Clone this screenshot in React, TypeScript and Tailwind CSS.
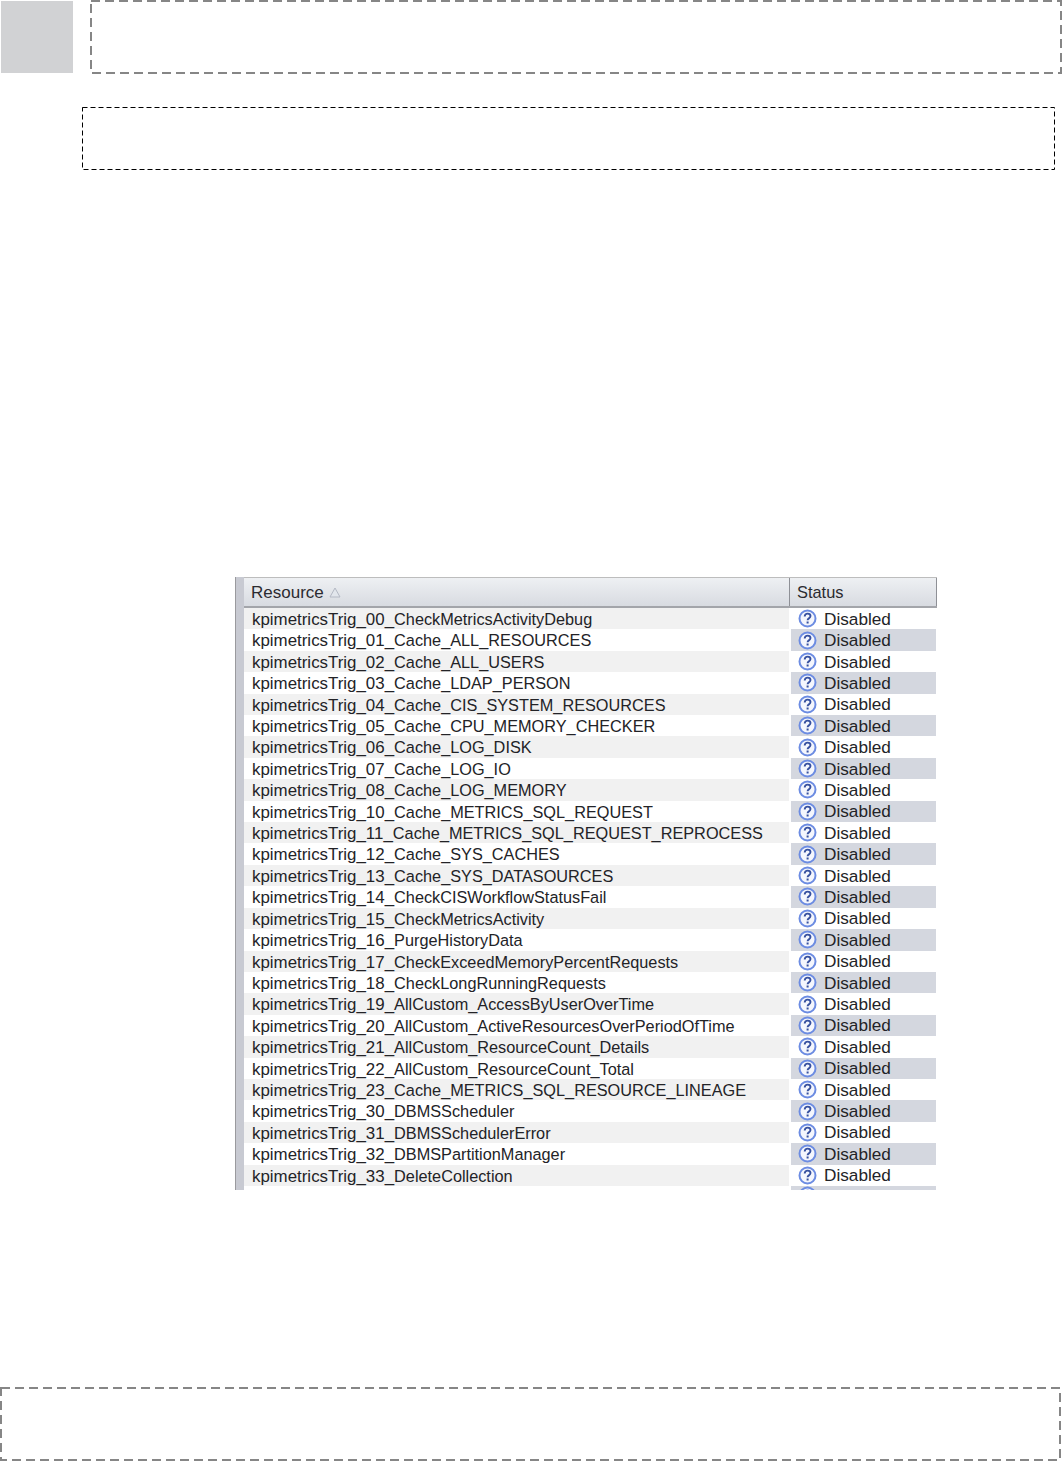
const rows = [
  'kpimetricsTrig_00_CheckMetricsActivityDebug',
  'kpimetricsTrig_01_Cache_ALL_RESOURCES',
  'kpimetricsTrig_02_Cache_ALL_USERS',
  'kpimetricsTrig_03_Cache_LDAP_PERSON',
  'kpimetricsTrig_04_Cache_CIS_SYSTEM_RESOURCES',
  'kpimetricsTrig_05_Cache_CPU_MEMORY_CHECKER',
  'kpimetricsTrig_06_Cache_LOG_DISK',
  'kpimetricsTrig_07_Cache_LOG_IO',
  'kpimetricsTrig_08_Cache_LOG_MEMORY',
  'kpimetricsTrig_10_Cache_METRICS_SQL_REQUEST',
  'kpimetricsTrig_11_Cache_METRICS_SQL_REQUEST_REPROCESS',
  'kpimetricsTrig_12_Cache_SYS_CACHES',
  'kpimetricsTrig_13_Cache_SYS_DATASOURCES',
  'kpimetricsTrig_14_CheckCISWorkflowStatusFail',
  'kpimetricsTrig_15_CheckMetricsActivity',
  'kpimetricsTrig_16_PurgeHistoryData',
  'kpimetricsTrig_17_CheckExceedMemoryPercentRequests',
  'kpimetricsTrig_18_CheckLongRunningRequests',
  'kpimetricsTrig_19_AllCustom_AccessByUserOverTime',
  'kpimetricsTrig_20_AllCustom_ActiveResourcesOverPeriodOfTime',
  'kpimetricsTrig_21_AllCustom_ResourceCount_Details',
  'kpimetricsTrig_22_AllCustom_ResourceCount_Total',
  'kpimetricsTrig_23_Cache_METRICS_SQL_RESOURCE_LINEAGE',
  'kpimetricsTrig_30_DBMSScheduler',
  'kpimetricsTrig_31_DBMSSchedulerError',
  'kpimetricsTrig_32_DBMSPartitionManager',
  'kpimetricsTrig_33_DeleteCollection',
]

function DashedBox({ className, w, h, thin }: { className: string; w: number; h: number; thin?: boolean }) {
  const inset = thin ? 0.5 : 1
  return (
    <div className={`relative ${className}`}>
      <svg className="absolute inset-0 w-full h-full" fill="none">
        <rect
          x={inset}
          y={inset}
          width={w - inset * 2}
          height={h - inset * 2}
          stroke={thin ? '#000' : '#868686'}
          strokeWidth={thin ? 1 : 2}
          strokeDasharray={thin ? '5 3' : '9 5'}
        />
      </svg>
    </div>
  )
}

function HelpIcon() {
  return (
    <svg width="19" height="19" viewBox="0 0 19 19" className="shrink-0">
      <circle cx="9.5" cy="9.5" r="8" fill="#f4f6fd" stroke="#6c8ce2" strokeWidth="2" />
      <path d="M6.7 7.4c0-1.7 1.2-2.8 2.9-2.8s2.9 1 2.9 2.5c0 2.3-2.9 2.2-2.9 4.1" fill="none" stroke="#36509f" strokeWidth="1.9" />
      <rect x="8.6" y="12.5" width="2" height="2" fill="#36509f" />
    </svg>
  )
}

function Row({ name, i }: { name: string; i: number }) {
  const odd = i % 2 === 1
  return (
    <div className="flex h-[21.42px] shrink-0 leading-[23px] text-[#232327]">
      <div className={`w-[545px] pl-[8px] text-[16.3px] whitespace-nowrap ${odd ? 'bg-white' : 'bg-[#f1f1f1]'}`}>
        <span className="text-[16.9px]">{name.slice(0, 18)}</span>
        {name.slice(18)}
      </div>
      <div className="w-[2px] bg-white" />
      <div className={`w-[145px] flex items-center gap-[7px] pl-[7px] text-[17.2px] ${odd ? 'bg-[#d4d7df]' : 'bg-white'}`}>
        <HelpIcon />
        <span className="pt-[1px]">Disabled</span>
      </div>
    </div>
  )
}

export default function App() {
  return (
    <div className="w-[1063px] h-[1461px] bg-white overflow-hidden font-['Liberation_Sans',sans-serif]">
      <div className="flex h-[73px]">
        <div className="w-[72px] h-[72px] mt-[1px] ml-[1px] bg-[#d1d2d4]" />
        <DashedBox w={972} h={74} className="ml-[17px] w-[972px] h-[74px]" />
      </div>
      <DashedBox thin w={973} h={63} className="mt-[34px] ml-[82px] w-[973px] h-[63px]" />

      <div className="mt-[407px] ml-[235px] w-[702px] h-[613px] flex overflow-hidden">
        <div className="w-[9px] bg-[#c8cad2] border-l border-[#9a9a9e]" />
        <div className="flex-1 flex flex-col overflow-hidden">
          <div className="flex h-[31px] shrink-0 text-[#2b2b30] bg-gradient-to-b from-[#eef0f3] to-[#d8dbe1] border-t border-[#bdbdbd] border-b-2 border-b-[#a3a5aa]">
            <div className="w-[546px] pl-[7px] pt-[1px] flex items-center gap-[5px] text-[17px] border-r border-[#8e9096]">
              Resource
              <svg width="12" height="11" viewBox="0 0 12 11">
                <path d="M6 1 L11 10 H1 Z" fill="#e2e6ec" stroke="#b4b9c4" />
              </svg>
            </div>
            <div className="flex-1 pl-[7px] flex items-center text-[16.4px] border-r border-[#8e9096]">Status</div>
          </div>
          {rows.map((name, i) => (
            <Row key={name} name={name} i={i} />
          ))}
          <div className="flex h-[21px] shrink-0">
            <div className="w-[547px]" />
            <div className="w-[145px] pl-[7px] bg-[#d4d7df]">
              <HelpIcon />
            </div>
          </div>
        </div>
      </div>

      <DashedBox w={1061} h={74} className="mt-[197px] w-[1061px] h-[74px]" />
    </div>
  )
}
